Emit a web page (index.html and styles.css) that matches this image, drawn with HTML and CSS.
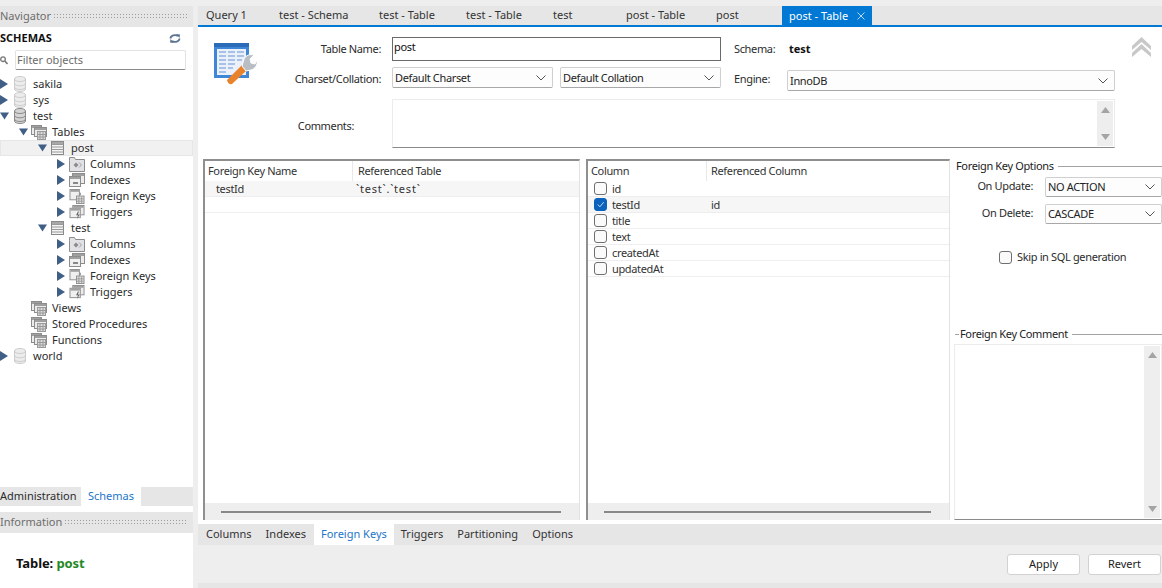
FILE: index.html
```html
<!DOCTYPE html>
<html lang="en">
<head>
<meta charset="utf-8">
<title>MySQL Workbench</title>
<link rel="stylesheet" href="styles.css">
</head>
<body>
<svg class="defs" width="0" height="0" aria-hidden="true">
  <defs>
    <symbol id="db" viewBox="0 0 12 16"><path d="M.5 3C.5 1.500 3 .5 6 .5s5.500 1 5.500 2.500v10c0 1.500-2.500 2.500-5.500 2.500S.5 14.500.5 13z" fill="#ececec" stroke="#cdcdcd"/><path d="M.5 3c0 1.500 2.500 2.500 5.500 2.500s5.500-1 5.500-2.500M.5 7.300c0 1.500 2.500 2.500 5.500 2.500s5.500-1 5.500-2.500M.5 11c0 1.500 2.500 2.500 5.500 2.500s5.500-1 5.500-2.500" fill="none" stroke="#cdcdcd"/></symbol>
    <symbol id="db-on" viewBox="0 0 12 16"><path d="M.5 3C.5 1.500 3 .5 6 .5s5.500 1 5.500 2.500v10c0 1.500-2.500 2.500-5.500 2.500S.5 14.500.5 13z" fill="#d4d4d4" stroke="#8a8a8a"/><path d="M.5 3c0 1.500 2.500 2.500 5.500 2.500s5.500-1 5.500-2.500M.5 7.300c0 1.500 2.500 2.500 5.500 2.500s5.500-1 5.500-2.500M.5 11c0 1.500 2.500 2.500 5.500 2.500s5.500-1 5.500-2.500" fill="none" stroke="#8a8a8a"/></symbol>
    <symbol id="table" viewBox="0 0 13 14"><rect x=".5" y=".5" width="12" height="13" fill="#f3f3f3" stroke="#8a8a8a"/><path d="M1 3.500h11M1 6h11M1 8.500h11M1 11h11" stroke="#9a9a9a"/><path d="M1 1h11v2H1z" fill="#a8a8a8"/></symbol>
    <symbol id="stack" viewBox="0 0 16 15"><rect x=".5" y=".5" width="10" height="9" fill="#ececec" stroke="#8c8c8c"/><path d="M1 1h9v2H1z" fill="#a0a0a0"/><rect x="3.500" y="2.500" width="12" height="9" fill="#ececec" stroke="#8c8c8c"/><path d="M4 3h11v2H4z" fill="#a0a0a0"/><rect x="6.500" y="6.500" width="8" height="8" fill="#dcdcdc" stroke="#9a9a9a"/><path d="M9 7v7M12 7v7M7 9.500h7M7 12h7" stroke="#9a9a9a"/></symbol>
    <symbol id="cols" viewBox="0 0 16 15"><path d="M.5 3.500v-3h5l1 2h9v12H.5z" fill="#e2e2e6" stroke="#8c8c8c"/><path d="M7 5.500L9.500 8 7 10.500 4.500 8z" fill="#8a8a8a"/><path d="M10 5.500l2.500 2.500-2.500 2.500" fill="none" stroke="#a0a0a0"/></symbol>
    <symbol id="idx" viewBox="0 0 16 15"><rect x="3.500" y=".5" width="12" height="10" fill="#ececec" stroke="#8c8c8c"/><path d="M4 1h11v2H4z" fill="#a0a0a0"/><rect x=".5" y="3.500" width="11" height="10" fill="#f0f0f0" stroke="#8c8c8c"/><path d="M1 4h10v2H1z" fill="#a0a0a0"/><path d="M4 10h5" stroke="#666" stroke-width="1.500"/></symbol>
    <symbol id="fk" viewBox="0 0 16 16"><rect x=".5" y=".5" width="10" height="11" fill="#f0f0f0" stroke="#8c8c8c"/><path d="M1 1h9v2H1z" fill="#a0a0a0"/><rect x="7.500" y="7.500" width="8" height="8" fill="#e4e4e4" stroke="#8c8c8c"/><path d="M10 8v7M13 8v7M8 10.500h7M8 13h7" stroke="#9a9a9a"/><path d="M11.500 6.500V4" stroke="#777"/></symbol>
    <symbol id="trg" viewBox="0 0 16 16"><rect x="3.500" y=".5" width="12" height="10" fill="#ececec" stroke="#8c8c8c"/><path d="M4 1h11v2H4z" fill="#a0a0a0"/><rect x=".5" y="3.500" width="11" height="10" fill="#f0f0f0" stroke="#8c8c8c"/><path d="M1 4h10v2H1z" fill="#a0a0a0"/><path d="M9 7l-2 4h2l-1 4 3-5H9l1-3z" fill="#666"/></symbol>
    <symbol id="arrow-r" viewBox="0 0 8 10"><path d="M0 0l8 5-8 5z" fill="#3f5f86"/></symbol>
    <symbol id="arrow-d" viewBox="0 0 10 8"><path d="M0 0h10L5 8z" fill="#3f5f86"/></symbol>
    <symbol id="chev" viewBox="0 0 10 6"><path d="M.5.500L5 5 9.500.500" fill="none" stroke="#555"/></symbol>
    <symbol id="up" viewBox="0 0 9 6"><path d="M4.500 0L9 6H0z" fill="#a4a4a4"/></symbol>
    <symbol id="down" viewBox="0 0 9 6"><path d="M4.500 6L9 0H0z" fill="#a4a4a4"/></symbol>
  </defs>
</svg>
<div class="app">
  <aside class="side">
    <div class="bar"><span>Navigator</span><i class="dots"></i></div>
    <div class="nav">
      <div class="schemas-head"><b>SCHEMAS</b>
        <svg class="refresh" viewBox="0 0 12 9" width="12" height="9"><path d="M1.500 4.500A4.500 3.500 0 0 1 9 2" fill="none" stroke="#5a7390" stroke-width="1.800"/><path d="M7 0l4 .5-.5 3.500z" fill="#5a7390"/><path d="M10.500 4.500A4.500 3.500 0 0 1 3 7" fill="none" stroke="#5a7390" stroke-width="1.800"/><path d="M5 9l-4-.5.5-3.500z" fill="#5a7390"/></svg>
      </div>
      <div class="filter">
        <svg class="lens" viewBox="0 0 8 9" width="8" height="9"><circle cx="3" cy="3.200" r="2.300" fill="none" stroke="#777" stroke-width="1.300"/><path d="M4.800 5l2.700 3" stroke="#777" stroke-width="1.600"/></svg>
        <div class="filter-input">Filter objects</div>
      </div>
      <div class="tree">
        <div class="row l0"><svg class="ar"><use href="#arrow-r"/></svg><svg class="ic db"><use href="#db"/></svg><span>sakila</span></div>
        <div class="row l0"><svg class="ar"><use href="#arrow-r"/></svg><svg class="ic db"><use href="#db"/></svg><span>sys</span></div>
        <div class="row l0"><svg class="ar ard"><use href="#arrow-d"/></svg><svg class="ic db"><use href="#db-on"/></svg><span>test</span></div>
        <div class="row l1"><svg class="ar ard"><use href="#arrow-d"/></svg><svg class="ic"><use href="#stack"/></svg><span>Tables</span></div>
        <div class="row l2 sel"><svg class="ar ard"><use href="#arrow-d"/></svg><svg class="ic tb"><use href="#table"/></svg><span>post</span></div>
        <div class="row l3"><svg class="ar"><use href="#arrow-r"/></svg><svg class="ic"><use href="#cols"/></svg><span>Columns</span></div>
        <div class="row l3"><svg class="ar"><use href="#arrow-r"/></svg><svg class="ic"><use href="#idx"/></svg><span>Indexes</span></div>
        <div class="row l3"><svg class="ar"><use href="#arrow-r"/></svg><svg class="ic"><use href="#fk"/></svg><span>Foreign Keys</span></div>
        <div class="row l3"><svg class="ar"><use href="#arrow-r"/></svg><svg class="ic"><use href="#trg"/></svg><span>Triggers</span></div>
        <div class="row l2"><svg class="ar ard"><use href="#arrow-d"/></svg><svg class="ic tb"><use href="#table"/></svg><span>test</span></div>
        <div class="row l3"><svg class="ar"><use href="#arrow-r"/></svg><svg class="ic"><use href="#cols"/></svg><span>Columns</span></div>
        <div class="row l3"><svg class="ar"><use href="#arrow-r"/></svg><svg class="ic"><use href="#idx"/></svg><span>Indexes</span></div>
        <div class="row l3"><svg class="ar"><use href="#arrow-r"/></svg><svg class="ic"><use href="#fk"/></svg><span>Foreign Keys</span></div>
        <div class="row l3"><svg class="ar"><use href="#arrow-r"/></svg><svg class="ic"><use href="#trg"/></svg><span>Triggers</span></div>
        <div class="row l1"><i class="ar"></i><svg class="ic"><use href="#stack"/></svg><span>Views</span></div>
        <div class="row l1"><i class="ar"></i><svg class="ic"><use href="#stack"/></svg><span>Stored Procedures</span></div>
        <div class="row l1"><i class="ar"></i><svg class="ic"><use href="#stack"/></svg><span>Functions</span></div>
        <div class="row l0"><svg class="ar"><use href="#arrow-r"/></svg><svg class="ic db"><use href="#db"/></svg><span>world</span></div>
      </div>
    </div>
    <div class="side-tabs"><span class="side-tab">Administration</span><span class="side-tab on">Schemas</span></div>
    <div class="bar info-bar"><span>Information</span><i class="dots"></i></div>
    <div class="info">
      <p><b>Table:</b> <b class="green">post</b></p>
      <p><b>Columns:</b></p>
    </div>
  </aside>

  <main class="main">
    <div class="tabs">
      <span class="tab">Query 1</span>
      <span class="tab">test - Schema</span>
      <span class="tab">test - Table</span>
      <span class="tab">test - Table</span>
      <span class="tab">test</span>
      <span class="tab">post - Table</span>
      <span class="tab">post</span>
      <span class="tab active">post - Table<svg class="close" viewBox="0 0 8 8" width="8" height="8"><path d="M.5.500l7 7M7.500.500l-7 7" stroke="#bcd9f2"/></svg></span>
    </div>

    <div class="body">
      <section class="form">
        <svg class="table-icon" viewBox="0 0 44 44" width="44" height="44">
          <rect x="1" y="1" width="35" height="35" fill="#3f86d6"/>
          <rect x="1" y="1" width="35" height="4" fill="#2a6cb8"/>
          <rect x="4" y="7" width="29" height="26" fill="#eaf1fb"/>
          <path d="M6 10h7M15 10h7M24 10h7M6 14h7M15 14h7M24 14h7M6 18h7M15 18h7M24 18h5M6 22h7M15 22h7M6 26h7M15 26h5M6 30h7" stroke="#a9c1e6" stroke-width="2"/>
          <path d="M14 38l15-15 5 5-15 14q-4 1-5-4z" fill="#e8832c"/>
          <path d="M29 24l2-7c2-4 6-5 10-4l-4 4 1 4 4 1 2-4c1 5-2 9-6 10l-5 1z" fill="#b9bec4" stroke="#fff"/>
        </svg>
        <label class="lbl lbl-name">Table Name:</label>
        <div class="text-input">post</div>
        <label class="lbl lbl-schema">Schema:</label>
        <b class="schema-val">test</b>
        <svg class="collapse" viewBox="0 0 19 20" width="19" height="20"><path d="M9.500 0L19 9v4L9.500 5 0 13V9z" fill="#c8c8c8"/><path d="M9.500 7L19 16v4l-9.500-8L0 20v-4z" fill="#c8c8c8"/></svg>

        <label class="lbl lbl-name">Charset/Collation:</label>
        <div class="pair">
          <div class="select">Default Charset<svg class="chev"><use href="#chev"/></svg></div>
          <div class="select">Default Collation<svg class="chev"><use href="#chev"/></svg></div>
        </div>
        <label class="lbl lbl-schema">Engine:</label>
        <div class="select engine">InnoDB<svg class="chev"><use href="#chev"/></svg></div>

        <label class="lbl lbl-comments">Comments:</label>
        <div class="textarea comments"><div class="vscroll"><svg class="sb-ar"><use href="#up"/></svg><svg class="sb-ar"><use href="#down"/></svg></div></div>
      </section>

      <section class="panels">
        <div class="grid-panel fk-list">
          <div class="ghead"><span class="c1a">Foreign Key Name</span><span class="c2">Referenced Table</span></div>
          <div class="grow alt"><span class="c1a indent">testId</span><span class="c2 ticks">`test`.`test`</span></div>
          <div class="grow"></div>
          <div class="spacer"></div>
          <div class="hscroll"><i class="thumb"></i></div>
        </div>
        <div class="grid-panel col-list">
          <div class="ghead"><span class="c1b">Column</span><span class="c2">Referenced Column</span></div>
          <div class="grow"><span class="c1b"><i class="check"></i>id</span></div>
          <div class="grow alt"><span class="c1b"><i class="check on"><svg viewBox="0 0 12 12" width="12" height="12"><path d="M3 6l2.300 2.500L9.500 3.500" fill="none" stroke="#cfe4f7"/></svg></i>testId</span><span class="c2">id</span></div>
          <div class="grow"><span class="c1b"><i class="check"></i>title</span></div>
          <div class="grow"><span class="c1b"><i class="check"></i>text</span></div>
          <div class="grow"><span class="c1b"><i class="check"></i>createdAt</span></div>
          <div class="grow"><span class="c1b"><i class="check"></i>updatedAt</span></div>
          <div class="spacer"></div>
          <div class="hscroll"><i class="thumb"></i></div>
        </div>
        <div class="options">
          <div class="legend"><span>Foreign Key Options</span><i></i></div>
          <div class="opt"><label>On Update:</label><div class="select opt-select">NO ACTION<svg class="chev"><use href="#chev"/></svg></div></div>
          <div class="opt"><label>On Delete:</label><div class="select opt-select">CASCADE<svg class="chev"><use href="#chev"/></svg></div></div>
          <div class="skip"><i class="check"></i>Skip in SQL generation</div>
          <div class="legend legend-c"><i class="dash"></i><span>Foreign Key Comment</span><i></i></div>
          <div class="textarea fk-comment"><div class="vscroll"><svg class="sb-ar"><use href="#up"/></svg><svg class="sb-ar"><use href="#down"/></svg></div></div>
        </div>
      </section>
    </div>

    <div class="btabs">
      <span class="btab">Columns</span>
      <span class="btab">Indexes</span>
      <span class="btab on">Foreign Keys</span>
      <span class="btab">Triggers</span>
      <span class="btab">Partitioning</span>
      <span class="btab">Options</span>
    </div>
    <div class="actions"><button class="btn">Apply</button><button class="btn">Revert</button></div>
    <div class="foot"></div>
  </main>
</div>
</body>
</html>
```
FILE: styles.css
```css
* { box-sizing: border-box; }
html, body { margin: 0; padding: 0; height: 100%; overflow: hidden; }
body { background: #eeeeee; font: 11px/16px "Noto Sans", "Open Sans", sans-serif; color: #2b2b2b; }
.defs { position: absolute; }
.app { display: flex; gap: 5px; height: 588px; padding-top: 6px; overflow: hidden; }

.side { width: 193px; flex: none; display: flex; flex-direction: column; background: #fff; }
.bar { height: 21px; flex: none; background: #e6e6e6; display: flex; align-items: center; gap: 2px; color: #6d6d6d; padding: 0 5px 1px 0; }
.dots { flex: 1; height: 6px; background-image: radial-gradient(#9c9c9c 0.7px, transparent 0.8px); background-size: 3px 3px; }
.nav { height: 460px; flex: none; display: flex; flex-direction: column; }
.schemas-head { height: 22px; display: flex; align-items: center; justify-content: space-between; padding: 0 12px 0 0; color: #111; }
.refresh { flex: none; }
.filter { display: flex; align-items: center; gap: 7px; height: 20px; margin-top: 1px; padding-right: 7px; }
.lens { flex: none; }
.filter-input { flex: 1; height: 20px; background: #fff; border: 1px solid #e2e2e2; border-bottom: 1px solid #8a8a8a; border-radius: 2px; padding-left: 1px; color: #6b6b6b; line-height: 18px; }
.tree { margin-top: 6px; }
.row { height: 16px; display: flex; align-items: center; white-space: nowrap; }
.row.sel { background: #f1f1f1; box-shadow: inset 0 0 0 1px #e6e6e6; }
.l0 { padding-left: 0; }
.l1 { padding-left: 19px; }
.l2 { padding-left: 38px; }
.l3 { padding-left: 57px; }
.ar { width: 8px; height: 10px; margin-right: 4px; flex: none; display: block; }
.ard { width: 9px; height: 8px; margin-right: 3px; }
.ic { width: 16px; height: 15px; flex: none; margin-right: 5px; }
.db { width: 12px; height: 16px; margin-left: 2px; margin-right: 7px; }
.tb { width: 13px; height: 14px; margin-right: 7px; margin-left: 1px; }
.side-tabs { height: 19px; flex: none; background: #e6e6e6; display: flex; }
.side-tab { line-height: 18px; width: 81px; }
.side-tab.on { width: 60px; background: #fff; color: #1b76c9; text-align: center; }
.info-bar { margin-top: 6px; }
.info { flex: 1; padding: 22px 16px 0; font-size: 13px; color: #111; letter-spacing: -0.1px; }
.info p { margin: 0 0 14px; line-height: 16px; }
.green { color: #1f8a1f; }

.main { flex: 1; min-width: 0; display: flex; flex-direction: column; }
.tabs { height: 21px; flex: none; background: #e6e6e6; border-bottom: 2px solid #0078d4; padding-left: 8px; display: grid; grid-template-columns: 73px 100px 87px 87px 73px 90px 66px 90px; color: #333; }
.tab { line-height: 18px; white-space: nowrap; }
.tab.active { background: #0078d4; color: #fff; padding: 0 7px; display: flex; align-items: center; justify-content: space-between; height: 19px; }
.close { flex: none; }
.body { height: 497px; flex: none; background: #fff; display: flex; flex-direction: column; letter-spacing: -0.35px; }
.form { display: grid; grid-template-columns: 58px 136px 329px 66px 328px 1fr; grid-template-rows: 24px 24px 51px; row-gap: 6px; padding-top: 10px; height: 132px; align-items: center; }
.table-icon { grid-row: 1 / span 2; margin: 5px 0 0 15px; align-self: start; }
.lbl { grid-column: 2; justify-self: end; margin-right: 11px; white-space: nowrap; }
.lbl-schema { grid-column: 4; justify-self: start; margin: 0 0 0 13px; }
.lbl-comments { grid-column: 2; margin-right: 38px; align-self: start; margin-top: 21px; }
.text-input { grid-column: 3; height: 24px; border: 1px solid #6a6a6a; padding: 0 1px; line-height: 17px; color: #111; }
.schema-val { margin-left: 2px; color: #111; grid-column: 5; letter-spacing: 0; }
.collapse { grid-column: 6; margin-left: 17px; align-self: start; }
.pair { grid-column: 3; display: flex; gap: 7px; align-self: start; }
.select { flex: 1; height: 21px; background: #fdfdfd; border: 1px solid #cfcfcf; border-bottom-color: #a8a8a8; border-radius: 2px; padding: 0 6px 0 2px; display: flex; align-items: center; justify-content: space-between; color: #222; white-space: nowrap; }
.engine { grid-column: 5; align-self: start; margin-top: 3px; }
.chev { width: 10px; height: 6px; flex: none; }
.textarea { background: #fff; border: 1px solid #ececec; border-bottom: 1px solid #8a8a8a; display: flex; justify-content: flex-end; padding: 1px; }
.comments { grid-column: 3 / span 3; height: 49px; width: 723px; align-self: end; }
.vscroll { width: 16px; background: #eeeeee; display: flex; flex-direction: column; align-items: center; justify-content: space-between; padding: 6px 0; }
.sb-ar { width: 9px; height: 6px; display: block; }

.panels { display: flex; height: 361px; padding-left: 5px; }
.grid-panel { display: flex; flex-direction: column; border-top: 2px solid #8f8f8f; border-left: 2px solid #8f8f8f; border-right: 1px solid #e2e2e2; }
.fk-list { width: 377px; margin-right: 6px; }
.col-list { width: 364px; margin-right: 5px; }
.ghead { height: 20px; flex: none; display: flex; align-items: center; color: #333; }
.c1a { width: 148px; padding-left: 3px; flex: none; align-self: stretch; line-height: 20px; }
.c1b { width: 119px; padding-left: 3px; flex: none; display: flex; align-items: center; align-self: stretch; line-height: 16px; }
.ghead .c1a, .ghead .c1b { border-right: 1px solid #e8e8e8; }
.c2 { padding-left: 4px; }
.fk-list .c2 { padding-left: 5px; }
.fk-list .ticks { padding-left: 3px; letter-spacing: 0.8px; }
.indent { padding-left: 11px; line-height: 16px; }
.grow { height: 16px; flex: none; border-bottom: 1px solid #eeeeee; display: flex; align-items: center; color: #333; }
.grow.alt { background: #f6f6f6; }
.check { width: 13px; height: 13px; flex: none; background: #fafafa; border: 1px solid #6f6f6f; border-radius: 3px; margin: 0 5px 0 3px; display: block; }
.check.on { background: #0a62bd; border-color: #0a62bd; }
.check svg { display: block; width: 11px; height: 11px; }
.spacer { flex: 1; }
.hscroll { height: 17px; flex: none; background: #eeeeee; display: flex; align-items: center; padding: 0 18px 0 16px; }
.thumb { flex: 1; height: 2px; background: #888888; }

.options { flex: 1; min-width: 0; display: flex; flex-direction: column; }
.legend { display: flex; align-items: center; gap: 4px; height: 14px; color: #222; white-space: nowrap; padding-left: 1px; }
.legend i { flex: 1; height: 1px; background: #a2a2a2; }
.opt { display: flex; align-items: center; height: 20px; margin-top: 7px; }
.legend + .opt { margin-top: 4px; }
.opt label { width: 78px; text-align: right; margin: 0 12px 2px 0; flex: none; }
.opt-select { flex: 1; height: 20px; }
.skip { display: flex; align-items: center; margin: 25px 0 0 44px; height: 16px; }
.skip .check { margin: 0 5px 0 0; }
.legend-c { margin-top: 62px; padding-left: 0; }
.legend-c .dash { flex: none; width: 4px; margin-right: -3px; }
.fk-comment { margin: 3px 0 0 -1px; height: 176px; }

.btabs { height: 21px; flex: none; background: #e6e6e6; display: flex; padding-left: 1px; color: #333; }
.btab { padding: 0 7px; line-height: 20px; }
.btab.on { background: #fff; color: #1b76c9; margin-left: 1px; }
.actions { height: 38px; flex: none; display: flex; justify-content: flex-end; align-items: center; gap: 8px; padding-right: 1px; }
.btn { width: 73px; height: 21px; background: #fff; border: 1px solid #d2d2d2; border-radius: 3px; font: inherit; color: #222; padding: 0; }
.foot { flex: 1; background: #e6e6e6; }
```
